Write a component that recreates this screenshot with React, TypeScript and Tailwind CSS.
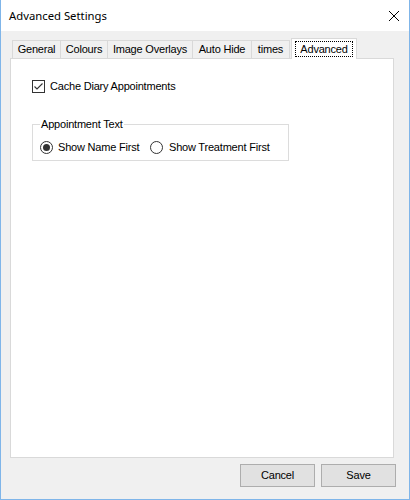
const tabs = [
  { label: "General", w: "w-[48px]" },
  { label: "Colours", w: "w-[47px]" },
  { label: "Image Overlays", w: "w-[85px]" },
  { label: "Auto Hide", w: "w-[59px]" },
  { label: "times", w: "w-[39px]" },
];

function Radio({ checked }: { checked?: boolean }) {
  return (
    <span className="w-[13px] h-[13px] rounded-full border border-[#333333] bg-white flex items-center justify-center shrink-0">
      {checked && <span className="w-[7px] h-[7px] rounded-full bg-[#333333]" />}
    </span>
  );
}

export default function App() {
  return (
    <div className="w-[410px] h-[500px] flex flex-col bg-[#f0f0f0] border-x border-b border-[#7fb5e9] text-black text-[11px] leading-[13px] tracking-[-0.2px] font-['Liberation_Sans',Arial,sans-serif]">
      {/* title bar */}
      <div className="h-[31px] bg-white flex items-center justify-between pl-[8px] pr-[9px] shrink-0">
        <span className="text-[11.3px] tracking-normal font-['Noto_Sans',sans-serif]">Advanced Settings</span>
        <svg width="12" height="12" viewBox="0 0 12 12" className="text-black">
          <path d="M1 1 L11 11 M11 1 L1 11" stroke="currentColor" strokeWidth="1" />
        </svg>
      </div>

      <div className="pt-[7px] pl-[9px] pr-[15px]">
        {/* tab strip */}
        <div className="flex items-end h-[21px] pl-[2px] relative z-10 -mb-px">
          {tabs.map((t, i) => (
            <div
              key={t.label}
              className={`${t.w} h-[18px] border-t border-l border-[#d9d9d9] bg-[#f0f0f0] flex items-center justify-center mb-px ${i === tabs.length - 1 ? "border-r" : ""}`}
            >
              {t.label}
            </div>
          ))}
          <div className="w-[66px] h-[21px] ml-[1px] border-t border-x border-[#d9d9d9] bg-white flex items-start justify-center pt-[2px]">
            <span className="border border-dotted border-black px-[3px] h-[16px] flex items-center w-[58px] justify-center">
              Advanced
            </span>
          </div>
        </div>

        {/* tab page */}
        <div className="h-[400px] border border-[#d9d9d9] bg-white pl-[21px] pt-[21px]">
          <label className="flex items-center gap-[5px] h-[13px]">
            <span className="w-[13px] h-[13px] border border-[#333333] bg-white flex items-center justify-center">
              <svg width="11" height="11" viewBox="0 0 11 11">
                <path d="M1.5 5.5 L4 8 L9.5 2.5" stroke="#333333" strokeWidth="1.1" fill="none" />
              </svg>
            </span>
            <span>Cache Diary Appointments</span>
          </label>

          <fieldset className="mt-[25px] w-[257px] border border-[#dcdcdc] pl-[7px] pb-[6px]">
            <legend className="px-[1px] leading-[13px]">Appointment Text</legend>
            <div className="flex items-center h-[13px] mt-[10px]">
              <label className="flex items-center gap-[5px] w-[110px]">
                <Radio checked />
                <span>Show Name First</span>
              </label>
              <label className="flex items-center gap-[6px]">
                <Radio />
                <span>Show Treatment First</span>
              </label>
            </div>
          </fieldset>
        </div>
      </div>

      {/* buttons */}
      <div className="flex justify-end gap-[6px] mt-[6px] pr-[13px]">
        <button className="w-[75px] h-[23px] border border-[#adadad] bg-[#e1e1e1]">Cancel</button>
        <button className="w-[75px] h-[23px] border border-[#adadad] bg-[#e1e1e1]">Save</button>
      </div>
    </div>
  );
}
